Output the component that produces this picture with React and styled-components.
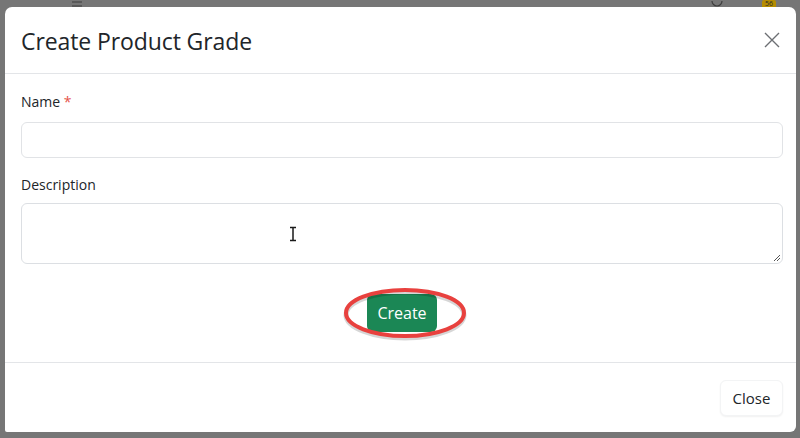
import styled, { createGlobalStyle } from 'styled-components';

const GlobalStyle = createGlobalStyle`
  html, body {
    margin: 0;
    padding: 0;
    width: 800px;
    height: 438px;
    overflow: hidden;
    font-family: "Open Sans", "Noto Sans", sans-serif;
  }
`;

const Backdrop = styled.div`
  width: 800px;
  height: 438px;
  background: #767676;
  display: flex;
  flex-direction: column;
  box-sizing: border-box;
  padding: 0 4px 6px 5px;
`;

const PageStrip = styled.div`
  height: 7px;
  display: flex;
  align-items: flex-end;
  overflow: hidden;
  padding: 0 20px 0 66px;
  color: #3a3a3a;
`;

const Spacer = styled.div`
  flex: 1;
`;

const Badge = styled.span`
  background: #b58c00;
  color: #2a2a2a;
  font-size: 7px;
  line-height: 7px;
  padding: 0 3px;
  border-radius: 2px 2px 0 0;
  margin-left: 38px;
`;

const Modal = styled.div`
  flex: 1;
  background: #fff;
  border-radius: 7px 7px 6px 2px;
  display: flex;
  flex-direction: column;
  color: #212529;
`;

const Header = styled.div`
  height: 67px;
  box-sizing: border-box;
  display: flex;
  align-items: center;
  justify-content: space-between;
  padding: 0 12px 0 16px;
  border-bottom: 1px solid #e3e5e8;
`;

const Title = styled.h1`
  margin: 2px 0 0;
  font-size: 23px;
  font-weight: 500;
  letter-spacing: -0.1px;
`;

const CloseX = styled.button`
  border: none;
  background: none;
  padding: 0;
  width: 24px;
  height: 24px;
  display: flex;
  align-items: center;
  justify-content: center;
`;

const Body = styled.div`
  flex: 1;
  padding: 19px 13px 0 16px;
  display: flex;
  flex-direction: column;
`;

const Label = styled.label`
  font-size: 14px;
  line-height: 18px;
  margin-bottom: ${(p) => p.$gap}px;
`;

const Required = styled.span`
  color: #e5534b;
`;

const Input = styled.div`
  height: 36px;
  box-sizing: border-box;
  border: 1px solid #e1e3e6;
  border-radius: 6px;
  margin-bottom: 18px;
`;

const TextArea = styled.div`
  height: 61px;
  box-sizing: border-box;
  border: 1px solid #dcdfe3;
  border-radius: 6px;
  position: relative;
  display: flex;
  align-items: center;
  padding-left: 266px;
`;

const Grip = styled.svg`
  position: absolute;
  right: 1px;
  bottom: 1px;
`;

const Actions = styled.div`
  display: flex;
  justify-content: center;
  padding-top: 30px;
`;

const Ring = styled.div`
  position: relative;
  display: flex;
`;

const PrimaryButton = styled.button`
  background: #1b8755;
  color: #fff;
  border: none;
  border-radius: 6px;
  height: 38px;
  width: 70px;
  padding: 0;
  font-family: inherit;
  font-size: 16px;
`;

const Ellipse = styled.svg`
  position: absolute;
  left: -24px;
  top: -7px;
  pointer-events: none;
`;

const Footer = styled.div`
  height: 70px;
  box-sizing: border-box;
  border-top: 1px solid #e3e5e8;
  display: flex;
  align-items: center;
  justify-content: flex-end;
  padding: 0 13px 0 0;
`;

const SecondaryButton = styled.button`
  background: #fff;
  border: 1px solid #f3f4f5;
  box-shadow: 0 1px 2px rgba(0, 0, 0, 0.06);
  border-radius: 6px;
  height: 36px;
  width: 63px;
  padding: 0;
  color: #212529;
  font-family: inherit;
  font-size: 15px;
  margin-top: 1px;
`;

export default function App() {
  return (
    <>
      <GlobalStyle />
      <Backdrop>
        <PageStrip>
          <svg width="12" height="6" viewBox="0 0 12 6">
            <path d="M1 1h10M1 5h10" stroke="#3d3d3d" strokeWidth="1" />
          </svg>
          <Spacer />
          <svg width="14" height="6" viewBox="0 0 14 6">
            <path d="M2 0a5 5 0 0 0 10 0" fill="none" stroke="#3d3d3d" strokeWidth="1.2" />
          </svg>
          <Badge>56</Badge>
        </PageStrip>
        <Modal>
          <Header>
            <Title>Create Product Grade</Title>
            <CloseX aria-label="close">
              <svg width="16" height="16" viewBox="0 0 16 16">
                <path d="M1 1L15 15M15 1L1 15" stroke="#6c6f73" strokeWidth="1.4" />
              </svg>
            </CloseX>
          </Header>
          <Body>
            <Label $gap={11}>
              Name <Required>*</Required>
            </Label>
            <Input />
            <Label $gap={9}>Description</Label>
            <TextArea>
              <svg width="10" height="16" viewBox="0 0 10 16">
                <path d="M2 1.5h6M5 1.5v13M2 14.5h6" stroke="#1a1a1a" strokeWidth="1.5" fill="none" />
              </svg>
              <Grip width="8" height="8" viewBox="0 0 8 8">
                <path d="M7 1L1 7M7 4L4 7" stroke="#555" strokeWidth="1" />
              </Grip>
            </TextArea>
            <Actions>
              <Ring>
                <PrimaryButton>Create</PrimaryButton>
                <Ellipse width="124" height="54" viewBox="0 0 124 54">
                  <ellipse cx="62" cy="28" rx="59" ry="23" fill="none" stroke="rgba(0,0,0,0.16)" strokeWidth="5" />
                  <ellipse cx="62" cy="26" rx="59" ry="23" fill="none" stroke="#e8413e" strokeWidth="4" />
                </Ellipse>
              </Ring>
            </Actions>
          </Body>
          <Footer>
            <SecondaryButton>Close</SecondaryButton>
          </Footer>
        </Modal>
      </Backdrop>
    </>
  );
}
